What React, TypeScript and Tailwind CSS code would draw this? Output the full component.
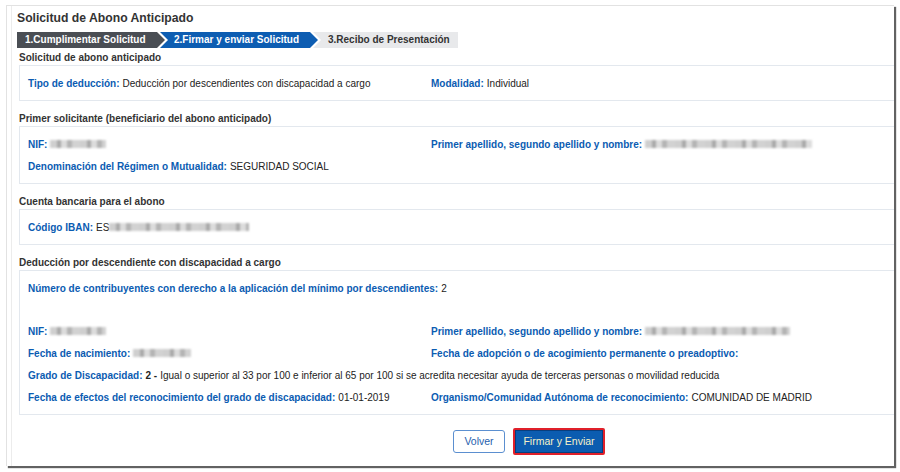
import React from "react";

function Blur({ w }: { w: number }) {
  return (
    <span
      className="inline-block align-middle h-[8px] blur-[1.2px] bg-[repeating-linear-gradient(90deg,#cfcfcf_0_7px,#a9a9a9_7px_11px,#dcdcdc_11px_17px,#b4b4b4_17px_22px,#d2d2d2_22px_30px)]"
      style={{ width: w }}
    />
  );
}

function Field({ label, children }: { label: string; children?: React.ReactNode }) {
  return (
    <div className="h-[22px] flex items-center whitespace-nowrap">
      <span className="font-bold text-[#0b5cb2]">{label}:</span>
      {children !== undefined && <span className="ml-[3px] flex items-center text-[#222]">{children}</span>}
    </div>
  );
}

function Heading({ children, first }: { children: React.ReactNode; first?: boolean }) {
  return (
    <div className={`${first ? "mt-[1px]" : "mt-[9px]"} ml-[2px] h-[16px] leading-[17px] font-bold text-[#333]`}>{children}</div>
  );
}

function Box({ children }: { children: React.ReactNode }) {
  return (
    <div className="ml-[2px] border border-r-0 border-[#e3e8ee] pl-[8px] pt-[6px] pb-[6px]">{children}</div>
  );
}

export default function App() {
  return (
    <div className="w-[900px] h-[472px] bg-white overflow-hidden pt-[5px] pl-[6px] font-['Liberation_Sans',Arial,sans-serif] text-[10px]">
      <div className="w-[888px] h-[461px] border-l border-t border-[#e2e2e2] shadow-[2px_2px_1px_rgba(70,70,70,0.85)] flex">
        <div className="ml-[4px] flex-1 border-l border-[#ececec] pl-[5px] flex flex-col">
          <div className="pt-[4px] h-[20px] leading-[16px] text-[12.2px] font-bold text-[#333]">Solicitud de Abono Anticipado</div>

          {/* Steps */}
          <div className="mt-[6px] flex h-[16px] leading-[16px] font-bold">
            <div className="w-[148px] pl-[8px] bg-[#4a4e54] text-white [clip-path:polygon(0_0,calc(100%_-_8px)_0,100%_50%,calc(100%_-_8px)_100%,0_100%)]">
              1.Cumplimentar Solicitud
            </div>
            <div className="-ml-[5px] w-[158px] pl-[14px] bg-[#0d5db2] text-white [clip-path:polygon(0_0,calc(100%_-_8px)_0,100%_50%,calc(100%_-_8px)_100%,0_100%,8px_50%)]">
              2.Firmar y enviar Solicitud
            </div>
            <div className="-ml-[5px] w-[145px] pl-[15px] bg-[#e8e9eb] text-[#333] [clip-path:polygon(0_0,100%_0,100%_100%,0_100%,8px_50%)]">
              3.Recibo de Presentación
            </div>
          </div>

          <Heading first>Solicitud de abono anticipado</Heading>
          <Box>
            <div className="grid grid-cols-[403px_1fr]">
              <Field label="Tipo de deducción">Deducción por descendientes con discapacidad a cargo</Field>
              <Field label="Modalidad">Individual</Field>
            </div>
          </Box>

          <Heading>Primer solicitante (beneficiario del abono anticipado)</Heading>
          <Box>
            <div className="grid grid-cols-[403px_1fr]">
              <Field label="NIF"><Blur w={56} /></Field>
              <Field label="Primer apellido, segundo apellido y nombre"><Blur w={167} /></Field>
              <Field label="Denominación del Régimen o Mutualidad">SEGURIDAD SOCIAL</Field>
            </div>
          </Box>

          <Heading>Cuenta bancaria para el abono</Heading>
          <Box>
            <Field label="Código IBAN">
              ES<Blur w={140} />
            </Field>
          </Box>

          <Heading>Deducción por descendiente con discapacidad a cargo</Heading>
          <Box>
            <Field label="Número de contribuyentes con derecho a la aplicación del mínimo por descendientes">2</Field>
            <div className="h-[21px]" />
            <div className="grid grid-cols-[403px_1fr]">
              <Field label="NIF"><Blur w={56} /></Field>
              <Field label="Primer apellido, segundo apellido y nombre"><Blur w={145} /></Field>
              <Field label="Fecha de nacimiento"><Blur w={58} /></Field>
              <Field label="Fecha de adopción o de acogimiento permanente o preadoptivo" />
            </div>
            <Field label="Grado de Discapacidad">
              <span className="font-bold mr-[3px]">2 -</span>
              Igual o superior al 33 por 100 e inferior al 65 por 100 si se acredita necesitar ayuda de terceras personas o movilidad reducida
            </Field>
            <div className="grid grid-cols-[403px_1fr]">
              <Field label="Fecha de efectos del reconocimiento del grado de discapacidad">01-01-2019</Field>
              <Field label="Organismo/Comunidad Autónoma de reconocimiento">COMUNIDAD DE MADRID</Field>
            </div>
          </Box>

          {/* Buttons */}
          <div className="mt-[13px] flex items-center pl-[436px] gap-[8px]">
            <button className="w-[52px] h-[23px] rounded-[3px] border border-[#5b8fd0] bg-white text-[#1f5fae] text-[10.5px]">
              Volver
            </button>
            <span className="border-2 border-[#e0202a] rounded-[2px]">
              <span className="flex items-center justify-center w-[88px] h-[23px] bg-[#0b5cb0] border border-[#083e7e] text-[#f5f2c8] text-[10.5px]">
                Firmar y Enviar
              </span>
            </span>
          </div>
        </div>
      </div>
    </div>
  );
}
